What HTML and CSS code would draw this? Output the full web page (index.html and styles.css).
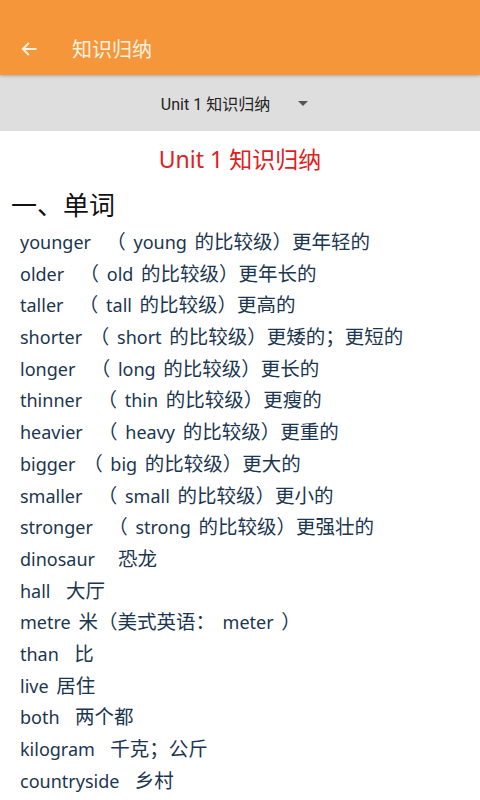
FILE: index.html
```html
<!DOCTYPE html>
<html lang="zh">
<head>
<meta charset="utf-8">
<link rel="stylesheet" href="styles.css">
</head>
<body>
<header class="appbar">
  <svg class="back" width="16" height="14" viewBox="0 0 16 14"><path d="M15.5 7H1.8M7.8 1L1.8 7l6 6" fill="none" stroke="#fdf3e3" stroke-width="1.9"/></svg>
  <span class="appbar-title">知识归纳</span>
</header>
<div class="selector">
  <span class="selector-text">Unit 1 知识归纳</span>
  <span class="caret"></span>
</div>
<main class="content">
  <h1 class="title">Unit 1 <span class="zh">知识归纳</span></h1>
  <h2 class="section">一、单词</h2>
  <ul class="words">
    <li>younger &nbsp;<span class="zh">（</span> young <span class="zh">的比较级）更年轻的</span></li>
    <li>older &nbsp;<span class="zh">（</span> old <span class="zh">的比较级）更年长的</span></li>
    <li>taller &nbsp;<span class="zh">（</span> tall <span class="zh">的比较级）更高的</span></li>
    <li>shorter <span class="zh">（</span> short <span class="zh">的比较级）更矮的；更短的</span></li>
    <li>longer &nbsp;<span class="zh">（</span> long <span class="zh">的比较级）更长的</span></li>
    <li>thinner &nbsp;<span class="zh">（</span> thin <span class="zh">的比较级）更瘦的</span></li>
    <li>heavier &nbsp;<span class="zh">（</span> heavy <span class="zh">的比较级）更重的</span></li>
    <li>bigger <span class="zh">（</span> big <span class="zh">的比较级）更大的</span></li>
    <li>smaller &nbsp;<span class="zh">（</span> small <span class="zh">的比较级）更小的</span></li>
    <li>stronger &nbsp;<span class="zh">（</span> strong <span class="zh">的比较级）更强壮的</span></li>
    <li>dinosaur &nbsp; <span class="zh">恐龙</span></li>
    <li>hall &nbsp;<span class="zh">大厅</span></li>
    <li>metre <span class="zh">米（美式英语：</span> meter <span class="zh">）</span></li>
    <li>than &nbsp;<span class="zh">比</span></li>
    <li>live <span class="zh">居住</span></li>
    <li>both &nbsp;<span class="zh">两个都</span></li>
    <li>kilogram &nbsp;<span class="zh">千克；公斤</span></li>
    <li>countryside &nbsp;<span class="zh">乡村</span></li>
  </ul>
</main>
</body>
</html>
```
FILE: styles.css
```css
html, body {
  margin: 0;
  padding: 0;
  background: #ffffff;
  font-family: "Noto Sans", "Noto Sans CJK SC", sans-serif;
}
.appbar {
  height: 75px;
  background: #f5963a;
  display: flex;
  align-items: center;
  padding-left: 21px;
  padding-top: 22px;
  box-sizing: border-box;
  box-shadow: 0 1px 3px rgba(0,0,0,0.25);
  position: relative;
  z-index: 1;
}
.back {
  display: block;
  margin-right: 35px;
}
.appbar-title {
  color: #fdf3e3;
  font-size: 20px;
  font-family: "Noto Sans CJK SC", sans-serif;
}
.selector {
  height: 56px;
  background: #dedede;
  display: flex;
  align-items: center;
  justify-content: center;
  padding-right: 11px;
}
.selector-text {
  font-size: 16px;
  color: #222;
  font-family: Roboto, "Noto Sans CJK SC", sans-serif;
}
.caret {
  width: 0;
  height: 0;
  border-left: 5px solid transparent;
  border-right: 5px solid transparent;
  border-top: 5px solid #555;
  margin-left: 28px;
  margin-top: 1px;
}
.content {
  padding: 0 0 0 10px;
}
.title {
  margin: 11px 0 0 0;
  text-align: center;
  color: #e02020;
  font-size: 23px;
  font-weight: normal;
  line-height: 34px;
  padding-right: 10px;
}
.section {
  margin: 12px 0 0 0;
  padding-left: 1px;
  font-size: 26px;
  font-weight: normal;
  color: #111;
  line-height: 34px;
}
.words {
  list-style: none;
  margin: 5px 0 0 0;
  padding: 0 0 0 10px;
}
.words li {
  font-size: 18px;
  line-height: 31.7px;
  height: 31.7px;
  color: #1b3650;
  white-space: nowrap;
  word-spacing: 3px;
}
.words .zh {
  font-size: 19.5px;
  line-height: 1;
}
```
